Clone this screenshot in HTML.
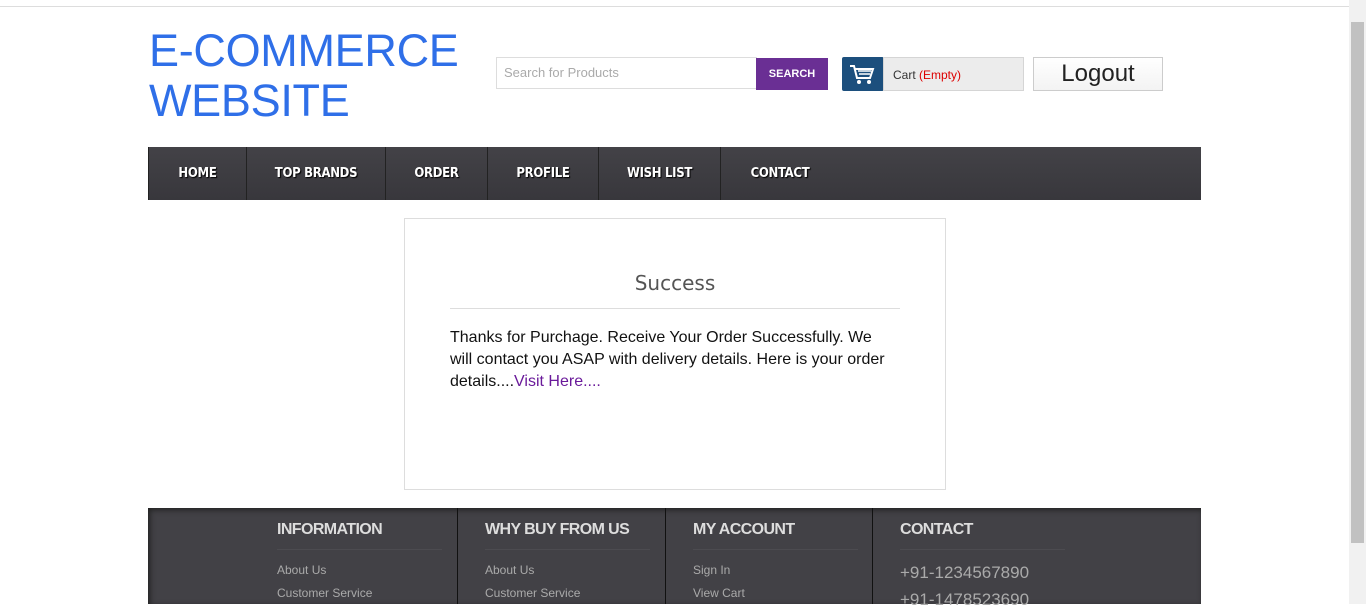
<!DOCTYPE html>
<html><head><style>
*{margin:0;padding:0;box-sizing:border-box}
body{width:1366px;height:604px;overflow:hidden;background:#fff;font-family:"Liberation Sans",sans-serif;position:relative}
.abs{position:absolute}
.topline{left:0;top:6px;width:1349px;height:1px;background:#ddd}
.sb{left:1349px;top:0;width:17px;height:604px;background:#f1f1f1}
.thumb{left:1351px;top:22px;width:13px;height:521px;background:#c1c1c1}
.logo{left:149px;top:26px;font-size:45px;line-height:50px;color:#2f6fe8;letter-spacing:-0.3px}
.search{left:496px;top:57px;width:261px;height:32px;border:1px solid #ddd;color:#aaa;font-size:13px;padding:7px 7px}
.sbtn{left:756px;top:58px;width:72px;height:32px;background:#6a2f94;color:#fff;font-size:11px;font-weight:bold;text-align:center;line-height:32px}
.cicon{left:842px;top:57px;width:42px;height:34px;background:#1c4f7d;border-radius:2px}
.cart{left:883px;top:57px;width:141px;height:34px;background:#ececec;border:1px solid #d5d5d5;font-size:12px;color:#333;padding:10px 9px}
.logout{left:1033px;top:57px;width:130px;height:34px;border:1px solid #ccc;background:linear-gradient(#fff,#f3f3f3);font-size:24px;color:#222;text-align:center;line-height:31px}
.nav{left:148px;top:147px;width:1053px;height:53px;background:linear-gradient(#434247,#38373c);display:flex}
.nav div{color:#fff;font-weight:bold;font-size:13px;line-height:54px;text-align:center;border-right:1px solid #222;text-shadow:1px 1px 1px #000;font-family:"DejaVu Sans Condensed","Liberation Sans",sans-serif;letter-spacing:-0.3px}
.box{left:404px;top:218px;width:542px;height:272px;border:1px solid #ddd}
.box h2{position:absolute;left:45px;top:52px;width:450px;text-align:center;font-weight:normal;font-size:20px;color:#555;padding-bottom:13px;border-bottom:1px solid #ddd;font-family:"DejaVu Sans","Liberation Sans",sans-serif}
.box p{position:absolute;left:45px;top:108px;width:440px;font-size:16px;line-height:22px;color:#111}
.box a{color:#6a1a9a;text-decoration:none}
.foot{left:148px;top:508px;width:1053px;height:96px;background:#424146;box-shadow:inset 2px 2px 6px #222}
.col{position:absolute;top:0;height:96px;border-left:1px solid #111}
.col h3{position:absolute;left:27px;top:13px;color:#ddd;font-size:16px;font-weight:bold;width:165px;padding-bottom:10px;border-bottom:1px solid #4c4b50;letter-spacing:-0.6px;white-space:nowrap}
.col div{position:absolute;left:27px;color:#aaa;font-size:12px;white-space:nowrap}
</style></head><body>
<div class="abs topline"></div>
<div class="abs sb"></div><div class="abs thumb"></div>
<div class="abs logo">E-COMMERCE<br>WEBSITE</div>
<div class="abs search">Search for Products</div>
<div class="abs sbtn">SEARCH</div>
<div class="abs cicon"><svg width="42" height="34" viewBox="0 0 42 34"><path d="M8 9h4l3 12h13l3-9H13" fill="none" stroke="#fff" stroke-width="2"/><path d="M16 14h13M17 17h11" stroke="#fff" stroke-width="1.5"/><circle cx="17" cy="25" r="2" fill="#fff"/><circle cx="27" cy="25" r="2" fill="#fff"/></svg></div>
<div class="abs cart">Cart <span style="color:#d00">(Empty)</span></div>
<div class="abs logout">Logout</div>
<div class="abs nav"><div style="width:99px;border-left:1px solid #222">HOME</div><div style="width:139px">TOP BRANDS</div><div style="width:102px">ORDER</div><div style="width:111px">PROFILE</div><div style="width:122px">WISH LIST</div><div style="width:118px;border-right:none">CONTACT</div></div>
<div class="abs box"><h2>Success</h2><p>Thanks for Purchage. Receive Your Order Successfully. We will contact you ASAP with delivery details. Here is your order details....<a>Visit Here....</a></p></div>
<div class="abs foot">
<div class="col" style="left:102px;border-left:none"><h3>INFORMATION</h3><div style="top:55px">About Us</div><div style="top:78px">Customer Service</div></div>
<div class="col" style="left:309px"><h3>WHY BUY FROM US</h3><div style="top:55px">About Us</div><div style="top:78px">Customer Service</div></div>
<div class="col" style="left:517px"><h3>MY ACCOUNT</h3><div style="top:55px">Sign In</div><div style="top:78px">View Cart</div></div>
<div class="col" style="left:724px"><h3>CONTACT</h3><div style="top:55px;font-size:17px">+91-1234567890</div><div style="top:82px;font-size:17px">+91-1478523690</div></div>
</div>
</body></html>
